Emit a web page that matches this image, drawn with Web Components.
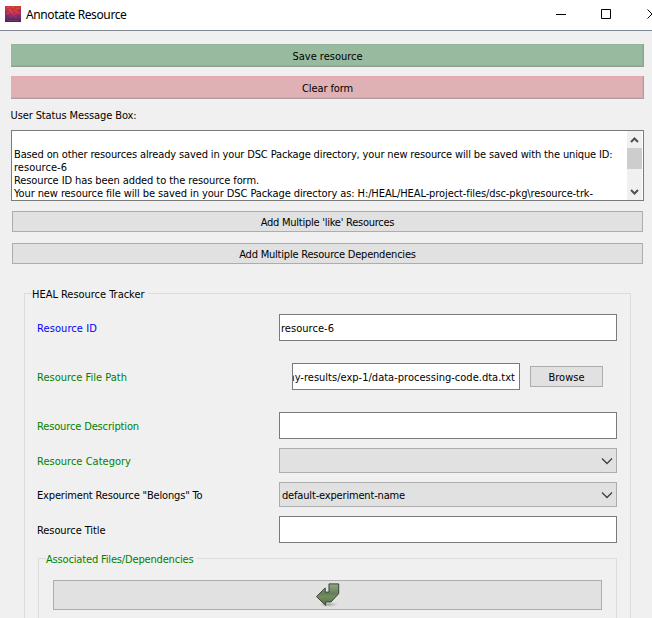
<!DOCTYPE html>
<html lang="en">
<head>
<meta charset="utf-8">
<title>Annotate Resource</title>
<style>
html,body{margin:0;height:100%;overflow:hidden;background:#f0f0f0}
body{font:11px/13px "DejaVu Sans Condensed","DejaVu Sans",sans-serif;font-stretch:condensed;color:#000}
</style>
</head>
<body>
<annotate-window></annotate-window>
<script>
const define = (name, html, setup) => customElements.define(name, class extends HTMLElement {
  connectedCallback() {
    if (this.shadowRoot) return;
    const t = document.createElement('template');
    t.innerHTML = html;
    this.attachShadow({mode: 'open'}).append(t.content.cloneNode(true));
    if (setup) setup(this, this.shadowRoot);
  }
});

/* One line of text tracked to a set width. */
define('fit-text', `<style>
:host{display:block;width:max-content;white-space:pre;transform:translateY(1px)}
</style><slot></slot>`, host => {
  const w = +host.getAttribute('w'), n = host.textContent.length;
  const natural = host.getBoundingClientRect().width;
  if (w && natural) host.style.letterSpacing = ((w - natural) / n).toFixed(4) + 'px';
});

define('title-bar', `<style>
:host{display:flex;align-items:center;height:30px;background:#fff;border-bottom:1px solid #7f8890;box-sizing:content-box;padding-left:5px;overflow:hidden;
font:12px/16px "Noto Sans","Open Sans",sans-serif;font-stretch:normal}
.logo{flex:none;margin-top:-2px}
fit-text{margin:0 0 0 5px;flex:none;transform:none}
.caps{margin-left:auto;flex:none;display:block}
</style>
<svg class="logo" width="16" height="16" viewBox="0 0 16 16" shape-rendering="crispEdges">
<defs><linearGradient id="g" x2="0" y2="1"><stop stop-color="#c8402f"/><stop offset=".4" stop-color="#c02e58"/><stop offset=".65" stop-color="#833064"/><stop offset="1" stop-color="#36255a"/></linearGradient></defs>
<rect width="16" height="16" fill="url(#g)"/>
<path fill="#e06a35" opacity=".5" d="M2 1h3v1H2zM7 0h2v2H7zM11 2h3v1h-3zM4 3h2v2H4zM9 4h3v1H9z"/>
<path fill="#e84a78" opacity=".5" d="M5 5h3v2H5zM10 6h4v1h-4zM2 7h2v1H2zM7 8h3v1H7z"/>
<path fill="#6a2a75" opacity=".6" d="M0 5h2v2H0zM0 9h4v2H0zM12 9h4v2h-4zM14 4h2v2h-2z"/>
<path fill="#a04a78" opacity=".45" d="M5 10h2v1H5zM9 11h3v1H9zM2 14h12v1H2z"/>
</svg>
<fit-text w="100.5">Annotate Resource</fit-text>
<svg class="caps" width="96" height="30" viewBox="556 0 96 30" fill="none" stroke="#000">
<path d="M556 14.5h10M601.500 9.500h9v9h-9zM647.500 9.500l9 9M656.500 9.500l-9 9"/></svg>`);

define('push-button', `<style>
:host{display:flex;align-items:center;justify-content:center;box-sizing:border-box;height:21px;background:#e1e1e1;border:1px solid #adadad}
:host([tone]){height:23px;border:0}
:host([tone=save]){background:#98bba0;box-shadow:inset -1px -1px #909f93,inset -2px -2px #93b09a,inset 0 1px #91b69a}
:host([tone=clear]){background:#dfb1b5;box-shadow:inset -1px -1px #b39a9d,inset -2px -2px #d0aaad,inset 0 1px #e5a9ae}
:host([tall]){height:30px}
</style><slot></slot>`);

define('status-box', `<style>
:host{display:flex;box-sizing:border-box;height:71px;background:#fff;border:1px solid #7a7a7a;padding-right:1px;overflow:hidden}
.lines{flex:1;padding:3px 0 0 2px;overflow:hidden;min-width:0}
.gap{height:13px}
.bar{width:15px;background:#f0f0f0;display:flex;flex-direction:column}
.thumb{height:21px;background:#cdcdcd;margin-bottom:auto}
svg{display:block;flex:none}
</style>
<div class="lines"><div class="gap"></div><slot></slot></div>
<div class="bar">
<svg width="15" height="17" fill="none" stroke="#505050" stroke-width="2"><path d="M4 11l3.500-3.500L11 11"/></svg>
<div class="thumb"></div>
<svg width="15" height="17" fill="none" stroke="#505050" stroke-width="2"><path d="M4 7l3.500 3.500L11 7"/></svg>
</div>`);

define('group-box', `<style>
:host{display:flex;flex-direction:column;box-sizing:border-box;border:1px solid #dcdcdc;border-bottom:0}
.legend{height:13px;margin:-7px 0 0 7px;background:#f0f0f0;width:max-content;padding-right:3px;flex:none}
:host([green]) .legend{color:#008000}
</style><div class="legend"><slot name="legend"></slot></div><slot></slot>`);

define('form-row', `<style>
:host{display:grid;grid-template-columns:242px 338px;align-items:center;margin-left:12px}
:host([tone=blue]) .l{color:#00f}
:host([tone=green]) .l{color:#008000}
.f{display:flex;align-items:center;min-width:0}
</style><div class="l"><slot name="label"></slot></div><div class="f"><slot></slot></div>`);

define('line-edit', `<style>
:host{display:flex;flex:1;align-items:center;box-sizing:border-box;height:27px;background:#fff;border:1px solid #7a7a7a;padding:0 1px;overflow:hidden}
:host([end]){flex:none;width:228px;margin:0 10px 0 13px;justify-content:flex-end;padding:0 4px 0 0}
</style><slot></slot>`);

define('combo-box', `<style>
:host{display:flex;flex:1;align-items:center;box-sizing:border-box;height:25px;background:#e1e1e1;border:1px solid #adadad;padding:0 3px 0 2px}
svg{margin-left:auto;display:block}
</style><slot></slot><svg width="12" height="8" viewBox="0 0 12 8" fill="none" stroke="#404040" stroke-width="1.300"><path d="M1 1.500l5 5 5-5"/></svg>`);

define('apply-icon', `<style>:host{display:block;margin-top:-1px}svg{display:block}</style>
<svg width="26" height="26" viewBox="0 0 26 26">
<defs><linearGradient id="a" x2="0" y2="1"><stop stop-color="#93a884"/><stop offset=".45" stop-color="#647e58"/><stop offset=".6" stop-color="#728e5f"/><stop offset="1" stop-color="#4f6c43"/></linearGradient>
<radialGradient id="s"><stop stop-color="#777" stop-opacity=".6"/><stop offset="1" stop-color="#999" stop-opacity="0"/></radialGradient></defs>
<ellipse cx="13.500" cy="22.500" rx="10" ry="2.800" fill="url(#s)"/>
<path d="M14 1.900h9.700v9.700l-7.600 8.300h-5.400v3.500L1.500 14.600l8.700-8.700v4.200H14z" fill="url(#a)" stroke="#3a4336" stroke-width="1" stroke-linejoin="round"/>
</svg>`);

define('annotate-window', `<style>
:host{display:block;width:652px;height:618px;overflow:hidden}
main{display:flex;flex-direction:column;padding:13px 8px 0 11px}
.thin{margin:0 1px 11px 1px;width:631px}
.top{width:633px;margin-bottom:9px}
.status{margin:0 0 9px -0.500px}
status-box{width:633px;margin-bottom:10px}
.outer{width:607px;height:340px;margin:18px 0 0 13px}
.inner{width:579px;height:70px;margin:15px 0 0 13px;flex:none}
.inner push-button{width:549px;margin:15px 0 0 14px}
.r1{margin-top:14px}.r2{margin-top:22px}.r3{margin-top:22px}.r4,.r5,.r6{margin-top:9px}
.browse{width:73px}
</style>
<title-bar></title-bar>
<main>
<push-button class="top" tone="save"><fit-text w="70">Save resource</fit-text></push-button>
<push-button class="top" tone="clear"><fit-text w="51">Clear form</fit-text></push-button>
<fit-text class="status" w="126">User Status Message Box:</fit-text>
<status-box>
<fit-text w="598.500">Based on other resources already saved in your DSC Package directory, your new resource will be saved with the unique ID:</fit-text>
<fit-text w="53">resource-6</fit-text>
<fit-text w="245">Resource ID has been added to the resource form.</fit-text>
<fit-text w="579">Your new resource file will be saved in your DSC Package directory as: H:/HEAL/HEAL-project-files/dsc-pkg\\resource-trk-</fit-text>
</status-box>
<push-button class="thin"><fit-text w="133.500">Add Multiple 'like' Resources</fit-text></push-button>
<push-button class="thin"><fit-text w="176.500">Add Multiple Resource Dependencies</fit-text></push-button>
<group-box class="outer">
<fit-text slot="legend" w="112.500">HEAL Resource Tracker</fit-text>
<form-row class="r1" tone="blue"><fit-text slot="label" w="60">Resource ID</fit-text><line-edit><fit-text w="53">resource-6</fit-text></line-edit></form-row>
<form-row class="r2" tone="green"><fit-text slot="label" w="90">Resource File Path</fit-text><line-edit end><fit-text w="230">my-results/exp-1/data-processing-code.dta.txt</fit-text></line-edit><push-button class="browse"><fit-text w="36">Browse</fit-text></push-button></form-row>
<form-row class="r3" tone="green"><fit-text slot="label" w="102">Resource Description</fit-text><line-edit></line-edit></form-row>
<form-row class="r4" tone="green"><fit-text slot="label" w="94">Resource Category</fit-text><combo-box></combo-box></form-row>
<form-row class="r5"><fit-text slot="label" w="165.500">Experiment Resource "Belongs" To</fit-text><combo-box><fit-text w="123">default-experiment-name</fit-text></combo-box></form-row>
<form-row class="r6"><fit-text slot="label" w="68.500">Resource Title</fit-text><line-edit></line-edit></form-row>
<group-box class="inner" green>
<fit-text slot="legend" w="147.500">Associated Files/Dependencies</fit-text>
<push-button tall><apply-icon></apply-icon></push-button>
</group-box>
</group-box>
</main>`);
</script>
</body>
</html>
